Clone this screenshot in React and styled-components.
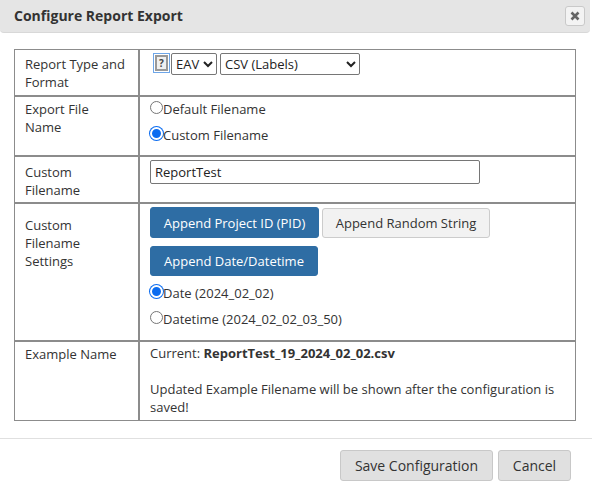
import React from "react";
import styled, { createGlobalStyle } from "styled-components";

const Global = createGlobalStyle`
  html, body { margin: 0; padding: 0; background: #fff; }
  body { font-family: "Open Sans", "Liberation Sans", sans-serif; font-size: 13px; line-height: 18px; color: #333; }
`;

const Dialog = styled.div`
  width: 592px;
  height: 491px;
  display: flex;
  flex-direction: column;
  overflow: hidden;
`;
const Header = styled.header`
  height: 32px;
  flex: none;
  display: flex;
  align-items: center;
  justify-content: space-between;
  padding: 0 5px 0 14px;
  background: #e5e5e5;
  border-bottom: 1px solid #d8d8d8;
  border-radius: 0 0 4px 4px;
  margin-right: 2px;
`;
const Title = styled.h1`
  margin: 0;
  font-size: 14px;
  font-weight: 700;
  line-height: 18px;
  color: #333;
`;
const CloseButton = styled.button`
  width: 20px;
  height: 20px;
  padding: 0;
  display: flex;
  align-items: center;
  justify-content: center;
  background: #f3f3f3;
  border: 1px solid #c9c9c9;
  border-radius: 3px;
`;
const Body = styled.main`
  padding: 16px 16px 0 14px;
  height: 388px;
  flex: none;
  box-sizing: border-box;
`;
const Table = styled.table`
  width: 562px;
  border-collapse: separate;
  border-spacing: 0;
  table-layout: fixed;
  border: 1px solid #8c8c8c;
`;
const LabelCol = styled.col`
  width: 125px;
`;
const Row = styled.tr`
  height: ${(p) => p.$h}px;
  & + tr > td { border-top: 2px solid #8c8c8c; }
`;
const LabelCell = styled.td`
  padding: ${(p) => p.$pt}px 10px 0 10px;
  vertical-align: top;
  border-right: 2px solid #8c8c8c;
`;
const ValueCell = styled.td`
  padding: ${(p) => p.$pt}px 10px 0 10px;
  vertical-align: top;
`;
const FormatRow = styled.div`
  display: flex;
  align-items: flex-start;
  padding-left: 3px;
`;
const HelpBox = styled.span`
  width: 17px;
  height: 20px;
  box-sizing: border-box;
  border: 1px solid #6ea6e8;
  padding: 1px;
  display: flex;
  margin-right: 1px;
`;
const HelpInner = styled.span`
  flex: 1;
  background: #f0f0f0;
  border: 2px solid #999;
  display: flex;
  align-items: center;
  justify-content: center;
  font-size: 10px;
  font-weight: 700;
  line-height: 1;
  color: #444;
`;
const SelectWrap = styled.span`
  position: relative;
  display: inline-flex;
  margin-right: 3px;
`;
const Select = styled.select`
  appearance: none;
  width: ${(p) => p.$w}px;
  height: 22px;
  padding: 0 0 0 4px;
  background: #fff;
  border: 1px solid #767676;
  border-radius: 2px;
  font: 13px "Open Sans", "Liberation Sans", sans-serif;
  color: #222;
`;
const Chevron = styled.svg`
  position: absolute;
  right: 4px;
  top: 7px;
  pointer-events: none;
`;
const RadioLine = styled.label`
  display: flex;
  align-items: flex-start;
  height: 18px;
  margin-top: ${(p) => p.$mt}px;
`;
const Radio = styled.input.attrs({ type: "radio", readOnly: true })`
  appearance: none;
  width: 13px;
  height: 13px;
  margin: 0;
  flex: none;
  border-radius: 50%;
  background: #fff;
  border: 1px solid #767676;
  box-sizing: border-box;
  margin-top: 1px;
  &:checked {
    background: #0b6cf0;
    border: 2px solid #fff;
    box-shadow: 0 0 0 1px #0b6cf0;
  }
`;
const TextInput = styled.input`
  display: block;
  box-sizing: border-box;
  width: 330px;
  height: 24px;
  padding: 0 4px;
  border: 1px solid #767676;
  border-radius: 2px;
  font: 13px "Open Sans", "Liberation Sans", sans-serif;
  color: #222;
`;
const ButtonRow = styled.div`
  display: flex;
  gap: 3px;
  margin-top: ${(p) => p.$mt || 0}px;
  align-items: center;
`;
const Btn = styled.button`
  box-sizing: border-box;
  height: ${(p) => p.$h || 31}px;
  width: ${(p) => p.$w}px;
  padding: 0;
  border-radius: 3px;
  font: 13px/18px "Open Sans", "Liberation Sans", sans-serif;
  border: 1px solid ${(p) => (p.$primary ? "#2e6da4" : "#ccc")};
  background: ${(p) => (p.$primary ? "#2e6da4" : "#f2f2f2")};
  color: ${(p) => (p.$primary ? "#fff" : "#333")};
`;
const Note = styled.p`
  margin: 0;
  & + & { margin-top: 18px; }
`;
const Footer = styled.footer`
  border-top: 1px solid #e0e0e0;
  margin-top: 17px;
  padding: 11px 21px 0 0;
  display: flex;
  justify-content: flex-end;
  gap: 5px;
`;
const FooterBtn = styled.button`
  box-sizing: border-box;
  height: 31px;
  width: ${(p) => p.$w}px;
  padding: 0;
  background: #e0e0e0;
  border: 1px solid #c8c8c8;
  border-radius: 3px;
  font: 14px/18px "Open Sans", "Liberation Sans", sans-serif;
  color: #333;
`;

const ChevronIcon = () => (
  <Chevron width="10" height="8" viewBox="0 0 10 8">
    <path d="M1 2l4 4 4-4" fill="none" stroke="#222" strokeWidth="2" />
  </Chevron>
);

export default function App() {
  return (
    <Dialog>
      <Global />
      <Header>
        <Title>Configure Report Export</Title>
        <CloseButton aria-label="Close">
          <svg width="10" height="10" viewBox="0 0 10 10">
            <path d="M1.5 1.5l7 7M8.5 1.5l-7 7" stroke="#666" strokeWidth="2.6" />
          </svg>
        </CloseButton>
      </Header>
      <Body>
        <Table>
          <colgroup>
            <LabelCol />
            <col />
          </colgroup>
          <tbody>
            <Row $h={45}>
              <LabelCell $pt={5}>Report Type and Format</LabelCell>
              <ValueCell $pt={3}>
                <FormatRow>
                  <HelpBox><HelpInner>?</HelpInner></HelpBox>
                  <SelectWrap>
                    <Select $w={46} defaultValue="EAV"><option>EAV</option></Select>
                    <ChevronIcon />
                  </SelectWrap>
                  <SelectWrap>
                    <Select $w={140} defaultValue="CSV (Labels)"><option>CSV (Labels)</option></Select>
                    <ChevronIcon />
                  </SelectWrap>
                </FormatRow>
              </ValueCell>
            </Row>
            <Row $h={60}>
              <LabelCell $pt={3}>Export File Name</LabelCell>
              <ValueCell $pt={3}>
                <RadioLine $mt={0}><Radio name="f" />Default Filename</RadioLine>
                <RadioLine $mt={8}><Radio name="f" defaultChecked />Custom Filename</RadioLine>
              </ValueCell>
            </Row>
            <Row $h={47}>
              <LabelCell $pt={6}>Custom Filename</LabelCell>
              <ValueCell $pt={3}><TextInput defaultValue="ReportTest" /></ValueCell>
            </Row>
            <Row $h={138}>
              <LabelCell $pt={12}>Custom Filename Settings</LabelCell>
              <ValueCell $pt={3}>
                <ButtonRow>
                  <Btn $primary $w={169}>Append Project ID (PID)</Btn>
                  <Btn $w={168} $h={30}>Append Random String</Btn>
                </ButtonRow>
                <ButtonRow $mt={8}>
                  <Btn $primary $w={168} $h={30}>Append Date/Datetime</Btn>
                </ButtonRow>
                <RadioLine $mt={8}><Radio name="d" defaultChecked />Date (2024_02_02)</RadioLine>
                <RadioLine $mt={8}><Radio name="d" />Datetime (2024_02_02_03_50)</RadioLine>
              </ValueCell>
            </Row>
            <Row $h={80}>
              <LabelCell $pt={3}>Example Name</LabelCell>
              <ValueCell $pt={2}>
                <Note>Current: <b>ReportTest_19_2024_02_02.csv</b></Note>
                <Note>Updated Example Filename will be shown after the configuration is saved!</Note>
              </ValueCell>
            </Row>
          </tbody>
        </Table>
      </Body>
      <Footer>
        <FooterBtn $w={153}>Save Configuration</FooterBtn>
        <FooterBtn $w={73}>Cancel</FooterBtn>
      </Footer>
    </Dialog>
  );
}
